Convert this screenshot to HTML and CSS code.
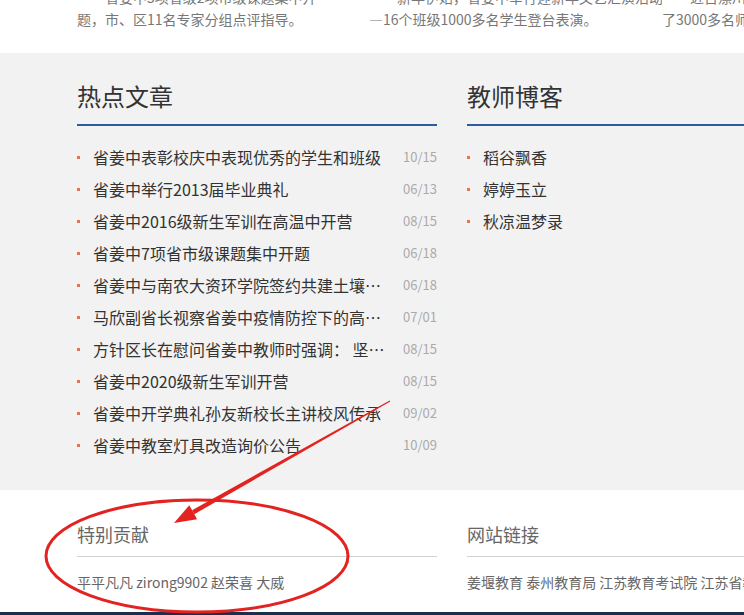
FILE: index.html
```html
<!DOCTYPE html>
<html lang="zh-CN">
<head>
<meta charset="utf-8">
<title>省姜中</title>
<link rel="stylesheet" href="styles.css">
</head>
<body>
<section class="intro">
  <div class="intro-cols">
    <div class="intro-col">
      <div class="line first">省姜中5项省级2项市级课题集中开</div>
      <div class="line">题，市、区11名专家分组点评指导。</div>
    </div>
    <div class="intro-col">
      <div class="line first">新年伊始，省姜中举行迎新年文艺汇演活动。同</div>
      <div class="line">—16个班级1000多名学生登台表演。</div>
    </div>
    <div class="intro-col">
      <div class="line first">近日漂川，省姜中组织开展</div>
      <div class="line">了3000多名师生参加活动</div>
    </div>
  </div>
</section>

<section class="hot">
  <div class="wrap">
    <div class="block">
      <h2 class="block-title">热点文章</h2>
      <ul class="news">
        <li><span class="title">省姜中表彰校庆中表现优秀的学生和班级</span><span class="date">10/15</span></li>
        <li><span class="title">省姜中举行2013届毕业典礼</span><span class="date">06/13</span></li>
        <li><span class="title">省姜中2016级新生军训在高温中开营</span><span class="date">08/15</span></li>
        <li><span class="title">省姜中7项省市级课题集中开题</span><span class="date">06/18</span></li>
        <li><span class="title">省姜中与南农大资环学院签约共建土壤研究基地</span><span class="date">06/18</span></li>
        <li><span class="title">马欣副省长视察省姜中疫情防控下的高考考点</span><span class="date">07/01</span></li>
        <li><span class="title">方针区长在慰问省姜中教师时强调： 坚持立德树人</span><span class="date">08/15</span></li>
        <li><span class="title">省姜中2020级新生军训开营</span><span class="date">08/15</span></li>
        <li><span class="title">省姜中开学典礼孙友新校长主讲校风传承</span><span class="date">09/02</span></li>
        <li><span class="title">省姜中教室灯具改造询价公告</span><span class="date">10/09</span></li>
      </ul>
    </div>
    <div class="block">
      <h2 class="block-title">教师博客</h2>
      <ul class="news">
        <li><span class="title">稻谷飘香</span></li>
        <li><span class="title">婷婷玉立</span></li>
        <li><span class="title">秋凉温梦录</span></li>
      </ul>
    </div>
  </div>
</section>

<section class="foot">
  <div class="wrap">
    <div class="block">
      <h3 class="foot-title">特别贡献</h3>
      <p class="foot-text">平平凡凡 zirong9902 赵荣喜 大威</p>
    </div>
    <div class="block">
      <h3 class="foot-title">网站链接</h3>
      <p class="foot-text">姜堰教育 泰州教育局 江苏教育考试院 江苏省教育厅</p>
    </div>
  </div>
</section>

<footer class="bar"></footer>

<svg class="annot" width="744" height="615" viewBox="0 0 744 615" xmlns="http://www.w3.org/2000/svg">
  <ellipse cx="197" cy="556" rx="151" ry="56" fill="none" stroke="#e3231f" stroke-width="3"/>
  <polygon points="390.3,401.5 389.7,400.5 192.1,510.2 194.3,514.2" fill="#e3231f"/>
  <polygon points="174,523 197.1,519.2 189.3,505.2" fill="#e3231f"/>
</svg>
</body>
</html>
```

FILE: styles.css
```css
html, body {
  margin: 0;
  padding: 0;
}
body {
  width: 744px;
  height: 615px;
  overflow: hidden;
  position: relative;
  font-family: "Noto Sans CJK SC", "Noto Sans", sans-serif;
  background: #fff;
}

.intro {
  height: 53px;
  overflow: hidden;
  background: #fff;
}
.intro-cols {
  margin-top: -14px;
  padding-left: 77px;
  display: grid;
  grid-template-columns: 292px 293px 300px;
  font-size: 14px;
  line-height: 22px;
  color: #777;
}
.intro-col {
  min-width: 0;
  overflow: hidden;
}
.intro-col .line {
  white-space: nowrap;
}
.intro-col .first {
  padding-left: 28px;
}

.wrap {
  margin-left: 77px;
  display: grid;
  grid-template-columns: 360px 360px;
  column-gap: 30px;
}

.hot {
  background: #f2f2f2;
  padding: 27px 0 29px;
}
.block-title {
  margin: 0;
  font-size: 24px;
  line-height: 32px;
  font-weight: normal;
  color: #333;
  padding-bottom: 12px;
  border-bottom: 2px solid #2f5b9f;
}
.news {
  list-style: none;
  margin: 15px 0 0;
  padding: 0;
}
.news li {
  display: flex;
  align-items: center;
  height: 32px;
}
.news li::before {
  content: "";
  flex: none;
  width: 3px;
  height: 3px;
  background: #e8704c;
  margin-right: 13px;
}
.news .title {
  flex: 0 1 296px;
  min-width: 0;
  white-space: nowrap;
  overflow: hidden;
  text-overflow: ellipsis;
  font-size: 16px;
  line-height: 32px;
  color: #333;
}
.news .date {
  margin-left: auto;
  font-size: 13px;
  color: #aaa;
  line-height: 32px;
}

.foot {
  background: #fff;
  padding: 32px 0 18px;
}
.foot-title {
  margin: 0;
  font-size: 18px;
  line-height: 24px;
  font-weight: normal;
  color: #666;
  padding-bottom: 10px;
  border-bottom: 1px solid #d2d2d2;
}
.foot-text {
  margin: 13px 0 0;
  font-size: 14px;
  line-height: 24px;
  color: #666;
  white-space: nowrap;
}

.bar {
  height: 40px;
  background: #1c2e4d;
}

.annot {
  position: absolute;
  top: 0;
  left: 0;
  pointer-events: none;
}
```
